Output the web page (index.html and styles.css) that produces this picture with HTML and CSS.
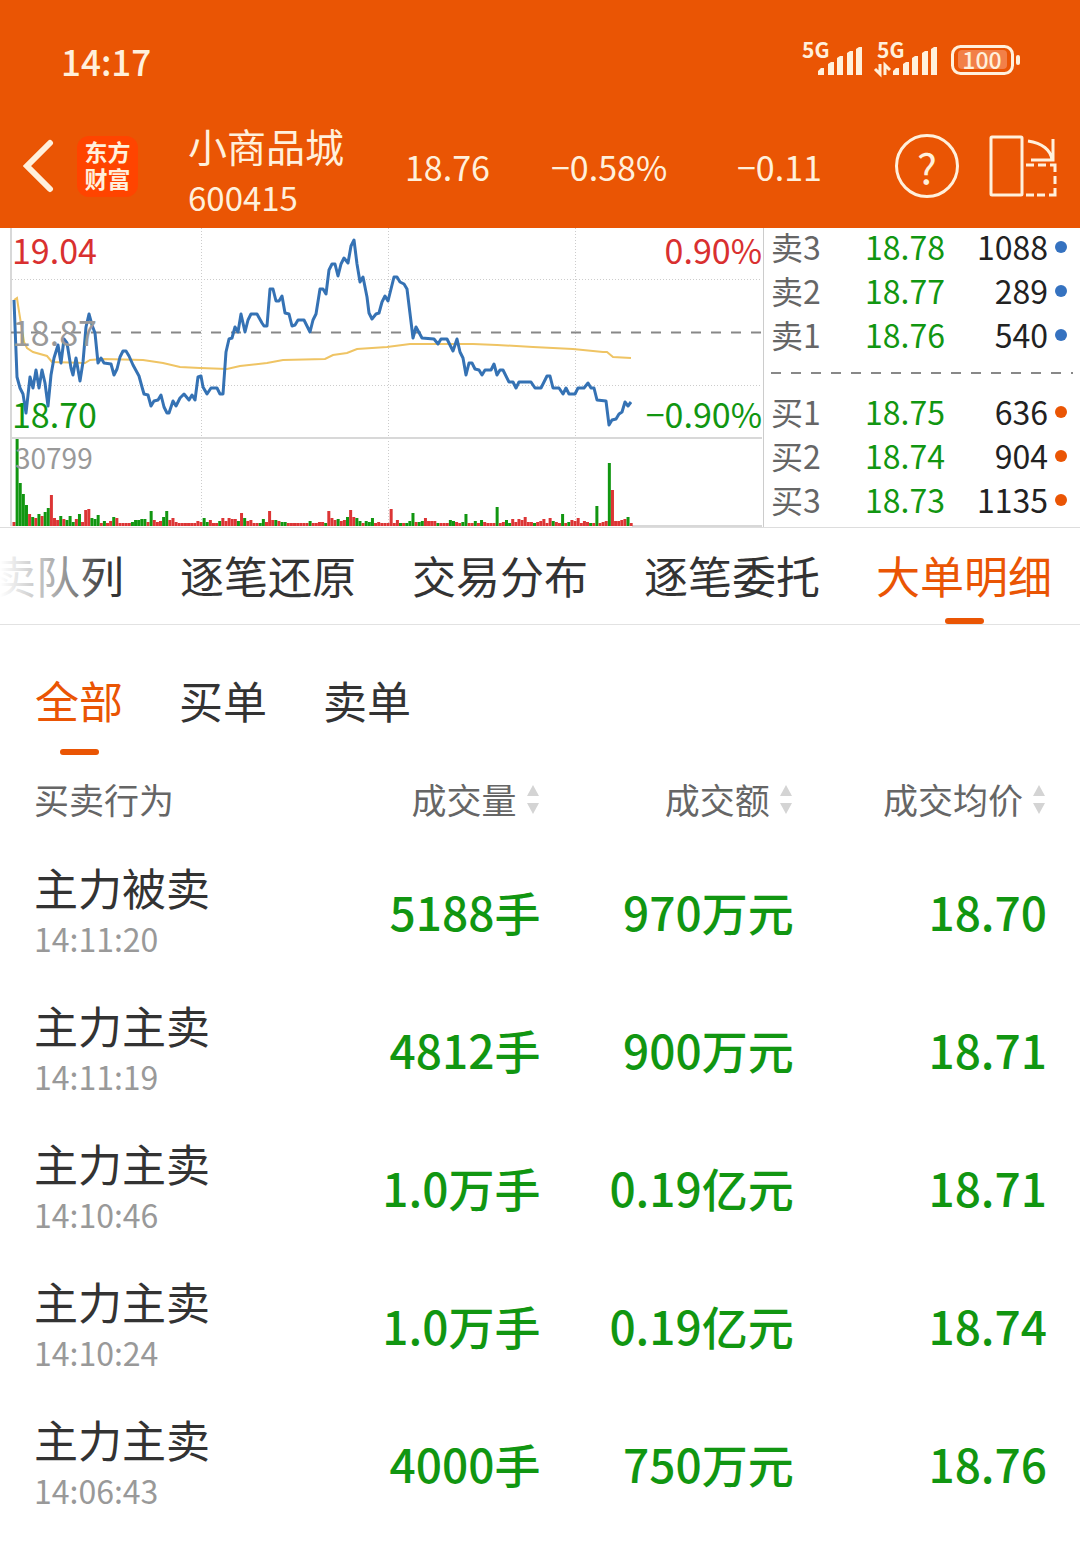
FILE: index.html
```html
<!doctype html>
<html lang="zh-CN">
<head>
    <meta charset="utf-8">
    <meta name="viewport" content="width=device-width">
    <title>小商品城 600415</title>
    <link rel="stylesheet" href="styles.css">
</head>

<body>
    <header class="top">
        <div class="status">
            <span class="clock">14:17</span>
            <svg class="signals" width="220" height="56" viewBox="800 32 220 56">
                <g class="network">
                    <text x="802" y="58">5G</text>
                    <text x="877" y="58">5G</text>
                </g>
                <g class="signal-bars">
                    <path d="M818 75v-4l3-3h3v7zM828 75v-11l3-2h3v13zM837 75v-17l3-2h3v19zM847 75v-22l3-2h3v24zM856 75v-26l3-2h3v28z"/>
                    <path d="M893 75v-4l3-3h3v7zM903 75v-11l3-2h3v13zM912 75v-17l3-2h3v19zM922 75v-22l3-2h3v24zM931 75v-26l3-2h3v28z"/>
                </g>
                <path class="traffic" d="M880 64v10l-5-5M885 75v-10l5 5"/>
                <rect class="battery" x="952.500" y="46.500" width="60" height="27" rx="8"/>
                <rect class="charge" x="958" y="50" width="49" height="19" rx="4"/>
                <path class="battery-tip" d="M1018 57v6"/>
                <text class="percent" x="982" y="69">100</text>
            </svg>
        </div>
        <div class="quote">
            <button class="back" aria-label="返回">
                <svg width="32" height="54" viewBox="0 0 32 54"><path d="M27 4L4 27l23 23"/></svg>
            </button>
            <div class="logo">东方<br>财富</div>
            <div class="stock">
                <h1>小商品城</h1>
                <div class="code">600415</div>
            </div>
            <span>18.76</span>
            <span>−0.58%</span>
            <span>−0.11</span>
            <button class="help" aria-label="帮助">?</button>
            <button class="rotate" aria-label="横屏">
                <svg width="68" height="64" viewBox="0 0 68 64">
                    <rect x="2" y="3" width="31" height="58" rx="1"/>
                    <path d="M39 7c14 2 23 9 24 19M64 5v21H42"/>
                    <path d="M37 31h8M49 31h8M61 31h5v7M66 42v8M66 54v7h-6M56 61h-8M45 61h-8"/>
                </svg>
            </button>
        </div>
    </header>

    <section class="market">
        <div class="chart">
            <svg viewBox="0 0 763 299">
                <path class="grid" d="M12 51.500H762M12 157.500H762M201.500 0V298M388.500 0V298M575.500 0V298"/>
                <path class="frame" d="M11 0V298M11 210H762M632 298H762"/>
                <path class="close" d="M11 104.500H762"/>
                <g id="volume"></g>
                <polyline class="average" points="14,72 17,70 18,77 22,102 24,114 27,120 33,124 47,128 52,134 85,135 90,132 103,131 143,132 163,135 180,139 200,140 227,141 240,138 267,135 283,132 325,131 333,127 347,125 357,121 387,119 410,116 447,116 473,116 497,117 533,119 573,121 603,124 607,124 613,129 631,130"/>
                <polyline class="price" points="14,72 17,149 20,160 23,166 26,185 30,149 33,160 36,142 39,160 42,142 45,155 48,178 51,147 54,130 58,117 61,135 64,111 67,115 71,140 73,147 76,130 80,153 83,134 86,99 89,86 92,97 95,105 98,135 101,130 104,135 111,136 114,147 117,141 120,129 123,123 126,123 129,128 133,137 139,148 142,159 144,166 148,167 151,178 154,173 158,172 161,167 164,179 167,185 169,185 173,173 176,178 180,170 184,166 189,172 192,167 195,172 198,149 201,148 203,159 207,166 211,160 217,160 220,166 223,166
                    226,124 229,111 232,110 235,99 238,104 241,86 245,104 248,92 251,86 257,86 262,95 264,98 267,98 270,61 273,61 276,73 279,73 282,68 285,85 289,86 292,98 295,97 298,92 304,92 307,98 310,104 313,92 316,86 320,61 323,61 326,66 329,42 332,36 335,36 338,48 341,36 344,30 348,35 351,18 354,12 357,36 360,54 363,49 367,69 369,85 372,91 376,86 379,85 382,74 385,68 388,73 391,61 394,49 397,49 400,54 404,56 407,61 413,110 416,99 422,110 434,111 438,116 441,111 447,111
                    453,123 457,111 460,124 463,130 466,147 469,135 472,135 475,141 479,142 482,147 485,142 491,142 494,136 497,147 500,142 503,142 509,154 513,154 516,160 519,154 531,154 535,160 541,160 547,148 550,148 553,160 559,160 563,166 566,160 569,166 575,166 578,160 584,160 588,155 591,160 594,160 597,172 606,173 609,197 612,192 616,191 619,186 622,184 625,174 628,178 631,174"/>
            </svg>
            <span class="mark high up">19.04</span>
            <span class="mark high right up">0.90%</span>
            <span class="mark middle">18.87</span>
            <span class="mark low down">18.70</span>
            <span class="mark low right down">−0.90%</span>
            <span class="mark vol">30799</span>
        </div>
        <div class="book">
            <table class="sell">
                <tr><th>卖3</th><td class="down">18.78</td><td>1088</td></tr>
                <tr><th>卖2</th><td class="down">18.77</td><td>289</td></tr>
                <tr><th>卖1</th><td class="down">18.76</td><td>540</td></tr>
            </table>
            <svg class="split" height="33"><line x1="0" y1="17" x2="100%" y2="17"/></svg>
            <table class="buy">
                <tr><th>买1</th><td class="down">18.75</td><td>636</td></tr>
                <tr><th>买2</th><td class="down">18.74</td><td>904</td></tr>
                <tr><th>买3</th><td class="down">18.73</td><td>1135</td></tr>
            </table>
        </div>
    </section>

    <nav class="tabs">
        <button>卖队列</button>
        <button>逐笔还原</button>
        <button>交易分布</button>
        <button>逐笔委托</button>
        <button class="active">大单明细</button>
    </nav>

    <nav class="filters">
        <button class="active">全部</button>
        <button>买单</button>
        <button>卖单</button>
    </nav>

    <table class="orders">
        <thead>
            <tr>
                <th>买卖行为</th>
                <th><button>成交量<i class="sort"></i></button></th>
                <th><button>成交额<i class="sort"></i></button></th>
                <th><button>成交均价<i class="sort"></i></button></th>
            </tr>
        </thead>
        <tbody>
            <tr>
                <td>主力被卖<time>14:11:20</time></td>
                <td>5188手</td>
                <td>970万元</td>
                <td>18.70</td>
            </tr>
            <tr>
                <td>主力主卖<time>14:11:19</time></td>
                <td>4812手</td>
                <td>900万元</td>
                <td>18.71</td>
            </tr>
            <tr>
                <td>主力主卖<time>14:10:46</time></td>
                <td>1.0万手</td>
                <td>0.19亿元</td>
                <td>18.71</td>
            </tr>
            <tr>
                <td>主力主卖<time>14:10:24</time></td>
                <td>1.0万手</td>
                <td>0.19亿元</td>
                <td>18.74</td>
            </tr>
            <tr>
                <td>主力主卖<time>14:06:43</time></td>
                <td>4000手</td>
                <td>750万元</td>
                <td>18.76</td>
            </tr>
        </tbody>
    </table>

    <script src="chart.js"></script>
</body>

</html>
```
FILE: styles.css
```css
* {
    box-sizing: border-box;
}

body {
    margin: 0;
    background-color: white;
    color: #333;
    font-family: "Noto Sans CJK SC", "Noto Sans", sans-serif;
}

button {
    padding: 0;
    border: 0;
    background: none;
    color: inherit;
    font: inherit;
    white-space: nowrap;
    cursor: pointer;
}

table {
    width: 100%;
    border-collapse: collapse;
    table-layout: fixed;
}

th, td {
    padding: 0;
    font-weight: normal;
}

svg {
    display: block;
    fill: none;
}

.up {
    color: #d93030;
}

.down {
    color: #119611;
}

/* header */
.top {
    background-color: #ea5504;
    color: #fff0dc;
}

.top svg {
    stroke: #fff0dc;
}

.status {
    display: flex;
    justify-content: space-between;
    align-items: center;
    height: 106px;
    padding: 14px 60px 0 61px;
}

.clock {
    font-size: 35px;
    font-weight: 500;
}

.signals text {
    fill: #fff0dc;
    stroke: none;
}

.network {
    font-size: 21px;
    font-weight: bold;
}

.signal-bars {
    fill: #fff0dc;
    stroke: none;
}

.traffic {
    stroke-width: 3;
}

.battery {
    stroke-width: 3;
}

.signals .charge {
    fill: #f28048;
    stroke: none;
}

.battery-tip {
    stroke-width: 4;
    stroke-linecap: round;
}

.percent {
    font-size: 23px;
    font-weight: 500;
    text-anchor: middle;
}

.quote {
    display: grid;
    grid-template-columns: 52px 111px 217fr 146fr 186fr 158fr 94px 68px;
    align-items: center;
    height: 122px;
    padding: 0 23px 2px 25px;
    font-size: 34px;
}

.back path {
    stroke-width: 6;
    stroke-linecap: round;
}

.back svg {
    margin-left: -2px;
}

.logo {
    width: 61px;
    height: 61px;
    padding-top: 2px;
    border-radius: 12px;
    background-color: #ff4400;
    font-size: 23px;
    font-weight: bold;
    line-height: 27px;
    text-align: center;
}

.stock {
    padding-top: 9px;
}

h1 {
    margin: 0;
    font-size: 39px;
    font-weight: normal;
    line-height: 52px;
}

.code {
    font-size: 33px;
    line-height: 52px;
}

.help {
    width: 64px;
    height: 64px;
    border: 3px solid #fff0dc;
    border-radius: 50%;
    font-size: 42px;
    line-height: 52px;
}

.rotate svg {
    stroke-width: 3;
}

/* chart and order book */
.market {
    display: grid;
    grid-template-columns: 764fr 316fr;
    border-bottom: 1px solid #ddd;
}

.chart {
    position: relative;
    border-right: 1px solid #ccc;
}

.grid {
    stroke: #ccc;
    stroke-dasharray: 1 2;
}

.frame {
    stroke: #d8d8d8;
    stroke-width: 2;
}

.close {
    stroke: #888;
    stroke-width: 2;
    stroke-dasharray: 10 10;
}

.average {
    stroke: #efc464;
    stroke-width: 2;
}

.price {
    stroke: #3572b4;
    stroke-width: 3;
    stroke-linejoin: round;
}

.rise {
    fill: #dc3535;
}

.fall {
    fill: #119611;
}

.mark {
    position: absolute;
    left: 12px;
    font-size: 34px;
    line-height: 40px;
}

.right {
    left: auto;
    right: 1px;
}

.high {
    top: 2px;
}

.middle {
    top: 84px;
    color: #999;
}

.low {
    top: 166px;
}

.vol {
    top: 209px;
    left: 15px;
    color: #999;
    font-size: 28px;
}

.book {
    margin-top: -4px;
    padding-left: 7px;
    font-size: 32px;
    line-height: 44px;
}

.book th {
    width: 80px;
    color: #666;
    text-align: left;
}

.book td {
    color: #222;
    text-align: right;
}

.book td.down {
    width: 94px;
    color: #119611;
}

.book td:last-child::after {
    content: "";
    display: inline-block;
    width: 12px;
    height: 12px;
    margin: 0 13px 7px 7px;
    border-radius: 50%;
    background-color: #3572c0;
}

.book .buy td:last-child::after {
    background-color: #ea5504;
}

.split {
    width: 100%;
    padding-right: 7px;
}

.split line {
    stroke: #888;
    stroke-width: 2;
    stroke-dasharray: 10 10;
}

/* tabs */
.tabs {
    position: relative;
    display: flex;
    justify-content: flex-end;
    gap: 56px;
    height: 97px;
    padding-right: 28px;
    border-bottom: 1px solid #e2e2e2;
    overflow: hidden;
    font-size: 44px;
}

.tabs button {
    padding-bottom: 2px;
}

.tabs::before {
    content: "";
    position: absolute;
    left: 0;
    width: 110px;
    height: 90px;
    background: linear-gradient(to right, white, rgba(255, 255, 255, 0.6) 50%, transparent);
    z-index: 1;
}

.filters {
    display: flex;
    gap: 56px;
    padding: 26px 35px 0;
    font-size: 44px;
}

.filters button {
    height: 104px;
    padding-bottom: 7px;
}

.active {
    position: relative;
    color: #ea5504;
}

.active::after {
    content: "";
    position: absolute;
    left: 50%;
    bottom: 0;
    width: 39px;
    height: 6px;
    margin-left: -19px;
    border-radius: 3px;
    background-color: #ea5504;
}

/* big orders */
.orders {
    margin: 0 33px 0 34px;
    width: calc(100% - 67px);
}

.orders th {
    height: 88px;
    padding-bottom: 2px;
    color: #666;
    font-size: 35px;
    text-align: right;
}

.orders th:first-child, .orders td:first-child {
    text-align: left;
}

.sort {
    display: inline-block;
    width: 12px;
    margin: 0 2px 0 10px;
}

.sort::before, .sort::after {
    content: "";
    display: block;
    border: 6px solid transparent;
    border-top: 0;
    border-bottom: 11px solid #d4d4d4;
}

.sort::after {
    margin-top: 7px;
    border-top: 11px solid #d4d4d4;
    border-bottom: 0;
}

.orders td {
    height: 138px;
    padding-bottom: 2px;
    color: #119611;
    font-size: 46px;
    font-weight: 500;
    text-align: right;
    white-space: nowrap;
}

.orders td:first-child {
    padding-bottom: 0;
    color: #333;
    font-size: 44px;
    font-weight: normal;
    line-height: 52px;
}

time {
    display: block;
    color: #999;
    font-size: 32px;
    line-height: 50px;
}
```
FILE: chart.js
```js
// volume per minute, negative = falling
var volumes = [
    4, -87, -43, -32, -21, 12, -9, 8, -12, 10, -14, -18, 31, 8, 6, -10, 7, -6, -10, -4,
    7, -12, 4, 16, 17, -8, -7, -11, 3, -5, 3, 5, -9, 8, 3, 3, 3, 3, -4, -6,
    -6, -7, -7, 4, -15, 6, 4, 5, -9, -15, 6, 8, 4, 3, 3, 3, 3, 3, 3, 5,
    4, -8, -4, 6, 3, 3, -5, 8, 5, 8, 7, 7, -5, 13, -8, 5, 6, 3, 3, -3,
    -7, 4, 15, 6, -6, 5, -4, -4, 3, 3, 3, 3, 3, 3, 3, -5, 3, 3, 4, 4,
    -3, 15, 8, 6, -7, 5, 6, -9, 16, 9, -8, -5, 3, -5, -4, -8, 3, 4, 3, 3,
    3, 17, 3, 6, -3, 3, -3, -5, -13, 4, -4, -5, 8, 5, 5, 5, -3, 3, 3, 3,
    -6, -5, 4, 3, -4, -12, 3, 3, -5, 3, -6, 4, 3, 3, 3, -19, 3, 4, -6, -3,
    7, 4, 7, 6, 9, 4, 4, -3, 4, 5, 7, 3, 8, -5, 4, 3, -12, 3, -4, 6,
    5, 8, 3, 5, 4, -3, 3, -20, 3, 4, 5, -63, 36, 5, 5, 6, 7, -9, 3
];

var step = 3.117;
var group = document.getElementById('volume');

for (var i = 0; i < volumes.length; i++) {
    var bar = document.createElementNS('http://www.w3.org/2000/svg', 'rect');
    var h = Math.abs(volumes[i]);
    bar.setAttribute('x', 12.5 + i * step);
    bar.setAttribute('y', 298 - h);
    bar.setAttribute('width', 3);
    bar.setAttribute('height', h);
    bar.setAttribute('class', volumes[i] > 0 ? 'rise' : 'fall');
    group.appendChild(bar);
}
```
